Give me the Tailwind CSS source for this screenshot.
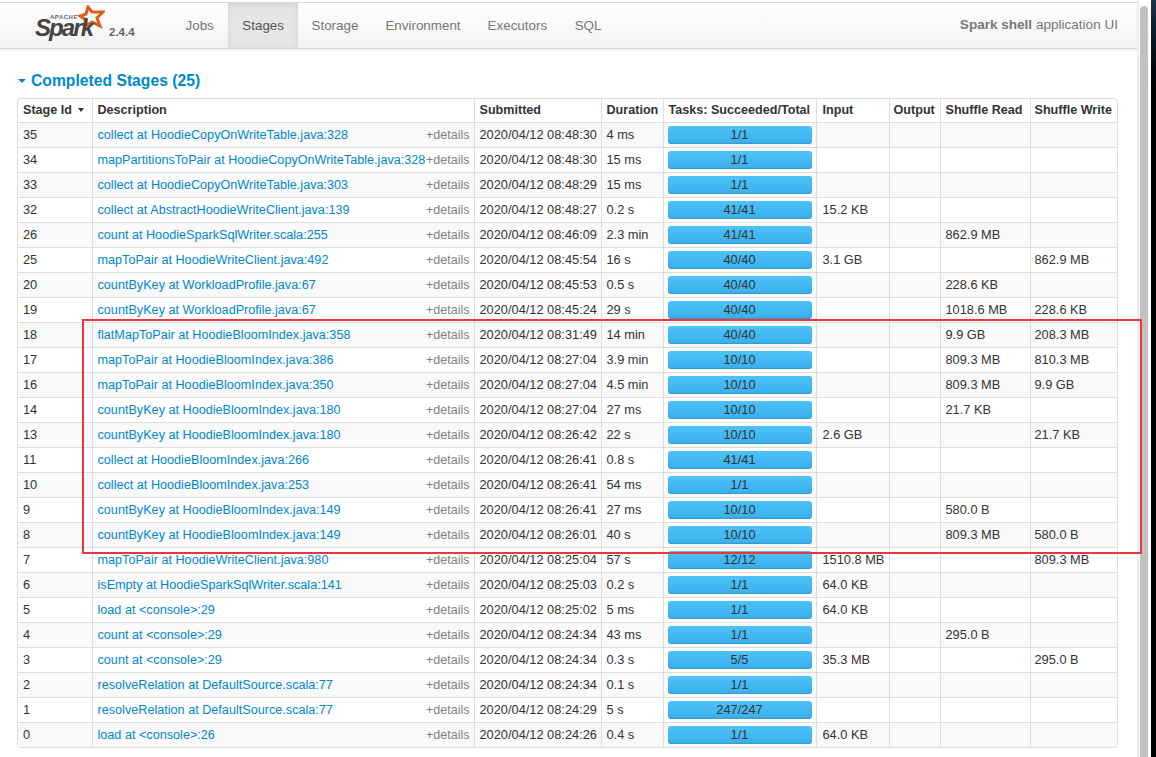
<!DOCTYPE html>
<html lang="en">
  <head>
    <meta charset="UTF-8" />
    <title>Spark shell - Stages</title>
    <script src="https://cdn.jsdelivr.net/npm/@tailwindcss/browser@4"></script>
  </head>
  <body class="relative h-[757px] w-[1156px] overflow-hidden bg-white font-['Liberation_Sans',sans-serif] text-[12.8px] text-[#333]">
    <div class="flex h-full">
      <main class="w-[1137px]">
        <!-- Navbar -->
        <nav class="mt-[2px] flex h-[47px] items-center border-y border-[#d8d8d8] bg-linear-to-b from-white to-[#f2f2f2] text-[13.4px] text-[#777] shadow-[0_1px_3px_rgba(0,0,0,0.08)]">
          <div class="relative h-full w-[172px] shrink-0">
            <svg class="absolute top-[2px] left-[77px]" width="28" height="26" viewBox="0 0 28 26">
              <path d="M11 2 L15 7 L26 7 L20 13 L23 21 L15 17 L9 21 L9 15 L3 11 L9 9 Z" fill="none" stroke="#e25a1c" stroke-width="3" stroke-linejoin="miter" />
            </svg>
            <span class="absolute top-[12px] left-[50px] text-[6px] leading-[5px] font-bold tracking-[0.5px] text-[#666]">APACHE</span>
            <span class="absolute top-[17px] left-[35px] text-[24px] leading-[16px] font-bold tracking-[-1.9px] text-[#444] italic">Spark</span>
            <span class="absolute top-[24px] left-[109px] text-[11.5px] leading-none font-bold text-[#666]">2.4.4</span>
          </div>
          <a class="pr-[14.5px] pl-[13.5px] leading-[45px]">Jobs</a>
          <a class="bg-[#e5e5e5] px-[14px] leading-[45px] text-[#555] shadow-[inset_0_2px_6px_rgba(0,0,0,0.08)]">Stages</a>
          <a class="px-[13.5px] leading-[45px]">Storage</a>
          <a class="px-[13.5px] leading-[45px]">Environment</a>
          <a class="px-[13.5px] leading-[45px]">Executors</a>
          <a class="px-[14px] leading-[45px]">SQL</a>
          <p class="mr-[19px] ml-auto text-[13.55px]"><strong>Spark shell</strong> application UI</p>
        </nav>

        <h4 class="mt-[20px] ml-[18px] flex h-[24px] items-center text-[15.7px] font-bold text-[#0088cc]">
          <span class="mr-[5px] h-0 w-0 border-x-[4px] border-t-[4px] border-x-transparent border-t-[#0088cc]"></span>
          Completed Stages (25)
        </h4>

        <div class="mt-[5px] ml-[17px] w-[1101px] overflow-hidden rounded-[4px] border border-[#ddd]">
          <table class="w-full table-fixed border-collapse text-left">
            <colgroup>
              <col class="w-[74px]" />
              <col class="w-[382px]" />
              <col class="w-[127px]" />
              <col class="w-[62px]" />
              <col class="w-[153px]" />
              <col class="w-[73px]" />
              <col class="w-[51px]" />
              <col class="w-[90px]" />
              <col class="w-[87px]" />
            </colgroup>
            <thead class="text-[12.6px] font-bold">
              <tr class="h-[23px] border-b border-[#ddd] whitespace-nowrap">
                <th class="px-[5px]">Stage Id <span class="ml-[3px] inline-block h-0 w-0 border-x-[3.5px] border-t-[4px] border-x-transparent border-t-[#333] align-middle"></span></th>
                <th class="border-l border-[#ddd] px-[5px]">Description</th>
                <th class="border-l border-[#ddd] pr-[3px] pl-[5px]">Submitted</th>
                <th class="border-l border-[#ddd] pr-[3px] pl-[5px]">Duration</th>
                <th class="border-l border-[#ddd] px-[5px]">Tasks: Succeeded/Total</th>
                <th class="border-l border-[#ddd] pr-[4px] pl-[6px]">Input</th>
                <th class="border-l border-[#ddd] px-[4px]">Output</th>
                <th class="border-l border-[#ddd] px-[5px]">Shuffle Read</th>
                <th class="border-l border-[#ddd] px-[4px]">Shuffle Write</th>
              </tr>
            </thead>
            <tbody id="rows"></tbody>
          </table>
        </div>
      </main>
      <!-- Scrollbar -->
      <div class="w-[14px] border-l-2 border-[#ececec] bg-white pt-[6px] pl-[1px]">
        <div class="h-[751px] w-[8px] rounded-t-[4px] bg-[#c1c1c1]"></div>
      </div>
      <div class="flex-1 bg-linear-to-b from-[#1d3448] to-black to-[15%]"></div>
    </div>

    <!-- Red highlight drawn over the table -->
    <div class="absolute top-[319px] left-[82px] h-[235px] w-[1060px] border-2 border-[#f0343c]"></div>

    <script>
      const stages = [
        ["35", "collect at HoodieCopyOnWriteTable.java:328", "2020/04/12 08:48:30", "4 ms", "1/1", "", "", "", ""],
        ["34", "mapPartitionsToPair at HoodieCopyOnWriteTable.java:328", "2020/04/12 08:48:30", "15 ms", "1/1", "", "", "", ""],
        ["33", "collect at HoodieCopyOnWriteTable.java:303", "2020/04/12 08:48:29", "15 ms", "1/1", "", "", "", ""],
        ["32", "collect at AbstractHoodieWriteClient.java:139", "2020/04/12 08:48:27", "0.2 s", "41/41", "15.2 KB", "", "", ""],
        ["26", "count at HoodieSparkSqlWriter.scala:255", "2020/04/12 08:46:09", "2.3 min", "41/41", "", "", "862.9 MB", ""],
        ["25", "mapToPair at HoodieWriteClient.java:492", "2020/04/12 08:45:54", "16 s", "40/40", "3.1 GB", "", "", "862.9 MB"],
        ["20", "countByKey at WorkloadProfile.java:67", "2020/04/12 08:45:53", "0.5 s", "40/40", "", "", "228.6 KB", ""],
        ["19", "countByKey at WorkloadProfile.java:67", "2020/04/12 08:45:24", "29 s", "40/40", "", "", "1018.6 MB", "228.6 KB"],
        ["18", "flatMapToPair at HoodieBloomIndex.java:358", "2020/04/12 08:31:49", "14 min", "40/40", "", "", "9.9 GB", "208.3 MB"],
        ["17", "mapToPair at HoodieBloomIndex.java:386", "2020/04/12 08:27:04", "3.9 min", "10/10", "", "", "809.3 MB", "810.3 MB"],
        ["16", "mapToPair at HoodieBloomIndex.java:350", "2020/04/12 08:27:04", "4.5 min", "10/10", "", "", "809.3 MB", "9.9 GB"],
        ["14", "countByKey at HoodieBloomIndex.java:180", "2020/04/12 08:27:04", "27 ms", "10/10", "", "", "21.7 KB", ""],
        ["13", "countByKey at HoodieBloomIndex.java:180", "2020/04/12 08:26:42", "22 s", "10/10", "2.6 GB", "", "", "21.7 KB"],
        ["11", "collect at HoodieBloomIndex.java:266", "2020/04/12 08:26:41", "0.8 s", "41/41", "", "", "", ""],
        ["10", "collect at HoodieBloomIndex.java:253", "2020/04/12 08:26:41", "54 ms", "1/1", "", "", "", ""],
        ["9", "countByKey at HoodieBloomIndex.java:149", "2020/04/12 08:26:41", "27 ms", "10/10", "", "", "580.0 B", ""],
        ["8", "countByKey at HoodieBloomIndex.java:149", "2020/04/12 08:26:01", "40 s", "10/10", "", "", "809.3 MB", "580.0 B"],
        ["7", "mapToPair at HoodieWriteClient.java:980", "2020/04/12 08:25:04", "57 s", "12/12", "1510.8 MB", "", "", "809.3 MB"],
        ["6", "isEmpty at HoodieSparkSqlWriter.scala:141", "2020/04/12 08:25:03", "0.2 s", "1/1", "64.0 KB", "", "", ""],
        ["5", "load at <console>:29", "2020/04/12 08:25:02", "5 ms", "1/1", "64.0 KB", "", "", ""],
        ["4", "count at <console>:29", "2020/04/12 08:24:34", "43 ms", "1/1", "", "", "295.0 B", ""],
        ["3", "count at <console>:29", "2020/04/12 08:24:34", "0.3 s", "5/5", "35.3 MB", "", "", "295.0 B"],
        ["2", "resolveRelation at DefaultSource.scala:77", "2020/04/12 08:24:34", "0.1 s", "1/1", "", "", "", ""],
        ["1", "resolveRelation at DefaultSource.scala:77", "2020/04/12 08:24:29", "5 s", "247/247", "", "", "", ""],
        ["0", "load at <console>:26", "2020/04/12 08:24:26", "0.4 s", "1/1", "64.0 KB", "", "", ""],
      ];

      const esc = (s) => s.replace(/</g, "&lt;").replace(/>/g, "&gt;");

      document.getElementById("rows").innerHTML = stages
        .map(([id, desc, submitted, duration, tasks, input, output, read, write], i) => `
          <tr class="h-[25px] border-t border-[#ddd] whitespace-nowrap ${i % 2 === 0 ? "bg-[#f9f9f9]" : "bg-white"}">
            <td class="px-[5px]">${id}</td>
            <td class="border-l border-[#ddd] pt-[1px] pr-[4px] pl-[5px]">
              <div class="flex justify-between">
                <a class="text-[12.65px] text-[#0088cc]">${esc(desc)}</a>
                <span class="text-[12.5px] text-[#808080]">+details</span>
              </div>
            </td>
            <td class="border-l border-[#ddd] pr-[3px] pl-[5px]">${submitted}</td>
            <td class="border-l border-[#ddd] pr-[3px] pl-[5px]">${duration}</td>
            <td class="border-l border-[#ddd] px-[4px]">
              <div class="flex h-[18px] items-center justify-center rounded-[3px] bg-linear-to-b from-[#4dc3fa] to-[#39aeea] shadow-[inset_0_-1px_1px_rgba(0,0,0,0.12)]">${tasks}</div>
            </td>
            <td class="border-l border-[#ddd] pr-[4px] pl-[6px]">${input}</td>
            <td class="border-l border-[#ddd] px-[4px]">${output}</td>
            <td class="border-l border-[#ddd] px-[5px]">${read}</td>
            <td class="border-l border-[#ddd] px-[4px]">${write}</td>
          </tr>`)
        .join("");
    </script>
  </body>
</html>
